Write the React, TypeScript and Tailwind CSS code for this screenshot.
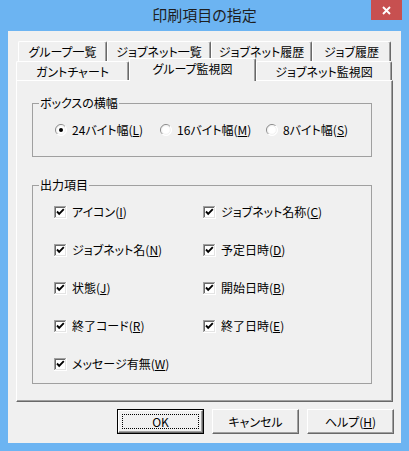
import React from "react";

function Acc({ pre, k }: { pre: string; k: string }) {
  return (
    <span className="whitespace-nowrap">
      {pre}(<span className="underline underline-offset-[1px]">{k}</span>)
    </span>
  );
}

function Radio({ checked }: { checked?: boolean }) {
  return (
    <svg width="12" height="12" viewBox="0 0 12 12" className="shrink-0">
      <defs>
        <linearGradient id="rg" x1="0" y1="0" x2="1" y2="1">
          <stop offset="0" stopColor="#707070" />
          <stop offset="0.5" stopColor="#a0a0a0" />
          <stop offset="0.5" stopColor="#ffffff" />
          <stop offset="1" stopColor="#ffffff" />
        </linearGradient>
      </defs>
      <circle cx="6" cy="6" r="5.5" fill="#ffffff" stroke="url(#rg)" strokeWidth="1" />
      <circle cx="6" cy="6" r="4.3" fill="#ffffff" stroke="#e6e6e6" strokeWidth="0.6" />
      {checked && <circle cx="6" cy="6" r="2" fill="#000" />}
    </svg>
  );
}

function Checkbox() {
  return (
    <svg width="13" height="13" viewBox="0 0 13 13" className="shrink-0" shapeRendering="crispEdges">
      <rect x="0" y="0" width="13" height="13" fill="#ffffff" />
      <rect x="0" y="0" width="12" height="1" fill="#a0a0a0" />
      <rect x="0" y="0" width="1" height="12" fill="#a0a0a0" />
      <rect x="1" y="1" width="10" height="1" fill="#696969" />
      <rect x="1" y="1" width="1" height="10" fill="#696969" />
      <rect x="1" y="11" width="11" height="1" fill="#e3e3e3" />
      <rect x="11" y="1" width="1" height="11" fill="#e3e3e3" />
      <path d="M3 5.5 L5.2 7.8 L9.8 3.2" stroke="#000" strokeWidth="1.9" fill="none" shapeRendering="auto" />
    </svg>
  );
}

function CheckItem({ pre, k }: { pre: string; k: string }) {
  return (
    <div className="flex items-center gap-[5px]">
      <Checkbox />
      <Acc pre={pre} k={k} />
    </div>
  );
}

const tabBase =
  "flex items-center justify-center border-l border-t border-r border-l-white border-t-white border-r-[#696969] shadow-[inset_-1px_0_0_#a0a0a0] rounded-t-[2px] bg-[#f0f0f0] whitespace-nowrap";

function Button({ children, def }: { children: React.ReactNode; def?: boolean }) {
  if (def) {
    return (
      <div className="w-[87px] h-[25px] border border-black flex">
        <div className="flex-1 flex p-[3px] border border-t-white border-l-white border-r-[#696969] border-b-[#696969] shadow-[inset_-1px_-1px_0_#a0a0a0] bg-[#f0f0f0]">
          <div className="flex-1 border border-dotted border-black flex items-center justify-center">
            {children}
          </div>
        </div>
      </div>
    );
  }
  return (
    <div className="w-[87px] h-[25px] flex items-center justify-center border border-t-white border-l-white border-r-[#696969] border-b-[#696969] shadow-[inset_-1px_-1px_0_#a0a0a0] bg-[#f0f0f0]">
      {children}
    </div>
  );
}

export default function App() {
  return (
    <div className="w-[409px] h-[451px] bg-[#6cb4f2] flex flex-col font-['Noto_Sans_CJK_JP',sans-serif] text-[12px] leading-[14px] text-black [font-feature-settings:'palt']">
      {/* title bar */}
      <div className="h-[31px] relative flex items-center justify-center">
        <span className="text-[15px] leading-[18px] text-[#1e1e1e] mt-[-1px]">印刷項目の指定</span>
        <div className="absolute right-[7px] top-0 w-[31px] h-[20px] bg-[#c75050] flex items-center justify-center">
          <svg width="9" height="9" viewBox="0 0 9 9">
            <path d="M1 1 L8 8 M8 1 L1 8" stroke="#fff" strokeWidth="1.9" />
          </svg>
        </div>
      </div>

      {/* client */}
      <div className="mx-[8px] h-[412px] bg-[#f0f0f0] flex flex-col pt-[10px]">
        {/* tab row 1 */}
        <div className="flex ml-[10px] h-[20px]">
          <div className={`${tabBase} w-[89px] h-[20px]`}>グループ一覧</div>
          <div className={`${tabBase} w-[104px] h-[20px]`}>ジョブネット一覧</div>
          <div className={`${tabBase} w-[101px] h-[20px]`}>ジョブネット履歴</div>
          <div className={`${tabBase} w-[79px] h-[20px]`}>ジョブ履歴</div>
        </div>
        {/* tab row 2 */}
        <div className="flex items-end ml-[8px] h-[19px]">
          <div className={`${tabBase} w-[113px] h-[19px] pt-[2px]`}>ガントチャート</div>
          <div className={`${tabBase} w-[127px] h-[23px] relative top-[1px] z-10 pb-[2px]`}>グループ監視図</div>
          <div className={`${tabBase} w-[136px] h-[19px] pt-[2px]`}>ジョブネット監視図</div>
        </div>
        {/* panel */}
        <div className="ml-[8px] w-[377px] h-[322px] border border-t-white border-l-white border-r-[#696969] border-b-[#696969] shadow-[inset_-1px_-1px_0_#a0a0a0] pl-[15px] flex flex-col">
          <fieldset className="mt-[15px] w-[340px] h-[61px] border border-[#a0a0a0] m-0 p-0">
            <legend className="ml-[6px] px-[1px] leading-[14px]">ボックスの横幅</legend>
            <div className="mt-[13px] h-[14px] flex items-center pl-[22px]">
              <div className="w-[105px] flex items-center gap-[5px]">
                <Radio checked />
                <Acc pre="24バイト幅" k="L" />
              </div>
              <div className="w-[106px] flex items-center gap-[5px]">
                <Radio />
                <Acc pre="16バイト幅" k="M" />
              </div>
              <div className="flex items-center gap-[5px]">
                <Radio />
                <Acc pre="8バイト幅" k="S" />
              </div>
            </div>
          </fieldset>

          <fieldset className="mt-[21px] w-[340px] h-[206px] border border-[#a0a0a0] m-0 p-0">
            <legend className="ml-[6px] px-[1px] leading-[14px]">出力項目</legend>
            <div className="mt-[1px] pl-[21px] grid grid-cols-[149px_1fr] auto-rows-[38px] items-center">
              <CheckItem pre="アイコン" k="I" />
              <CheckItem pre="ジョブネット名称" k="C" />
              <CheckItem pre="ジョブネット名" k="N" />
              <CheckItem pre="予定日時" k="D" />
              <CheckItem pre="状態" k="J" />
              <CheckItem pre="開始日時" k="B" />
              <CheckItem pre="終了コード" k="R" />
              <CheckItem pre="終了日時" k="E" />
              <CheckItem pre="メッセージ有無" k="W" />
            </div>
          </fieldset>
        </div>

        {/* buttons */}
        <div className="mt-[7px] flex justify-end gap-[8px] pr-[7px]">
          <Button def>OK</Button>
          <Button>キャンセル</Button>
          <Button>
            <Acc pre="ヘルプ" k="H" />
          </Button>
        </div>
      </div>
    </div>
  );
}
